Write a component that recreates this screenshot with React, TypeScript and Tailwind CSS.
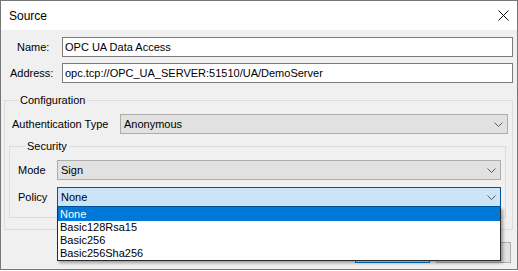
import React from "react";

const POLICIES = ["None", "Basic128Rsa15", "Basic256", "Basic256Sha256"];

function Chevron() {
  return (
    <svg width="9" height="5" viewBox="0 0 9 5" className="shrink-0">
      <polyline points="0.5,0.5 4.5,4.5 8.5,0.5" fill="none" stroke="#5a5a5a" strokeWidth="1" />
    </svg>
  );
}

function Combo({ value, active = false }: { value: string; active?: boolean }) {
  return (
    <div
      className={`flex h-[20px] w-full min-w-0 items-center justify-between border pl-[3px] pr-[4px] ${
        active ? "border-[#005499] bg-[#cce4f7]" : "border-[#adadad] bg-[#e1e1e1]"
      }`}
    >
      <span className="leading-[13px]">{value}</span>
      <Chevron />
    </div>
  );
}

export default function App() {
  return (
    <div
      className="flex h-[270px] w-[518px] flex-col border border-[#777777] bg-[#f0f0f0] text-[11px] text-black"
      style={{ fontFamily: '"Liberation Sans", Arial, sans-serif' }}
    >
      {/* title bar */}
      <div className="flex h-[29px] shrink-0 items-center justify-between bg-white pl-[8px] pr-[8px]">
        <span className="text-[12px]">Source</span>
        <svg width="11" height="11" viewBox="0 0 11 11">
          <path d="M0.5 0.5 L10.5 10.5 M10.5 0.5 L0.5 10.5" stroke="#111" strokeWidth="1" />
        </svg>
      </div>

      <div className="flex flex-1 flex-col pr-[4px]">
        <div className="mt-[7px] flex h-[20px] items-center">
          <span className="w-[61px] shrink-0 whitespace-nowrap pl-[16px]">Name:</span>
          <div className="flex h-full flex-1 items-center border border-[#7a7a7a] bg-white pl-[2px]">
            OPC UA Data Access
          </div>
        </div>
        <div className="mt-[6px] flex h-[20px] items-center">
          <span className="w-[61px] shrink-0 whitespace-nowrap pl-[9px]">Address:</span>
          <div className="flex h-full flex-1 items-center border border-[#7a7a7a] bg-white pl-[2px]">
            opc.tcp://OPC_UA_SERVER:51510/UA/DemoServer
          </div>
        </div>

        {/* Configuration */}
        <fieldset className="ml-[3px] mt-[11px] border border-[#dcdcdc] pb-[11px] pl-[7px] pr-[4px]">
          <legend className="ml-[6px] px-[2px] leading-[13px]">Configuration</legend>
          <div className="mt-[7px] flex items-center">
            <span className="w-[108px] shrink-0 whitespace-nowrap">Authentication Type</span>
            <Combo value="Anonymous" />
          </div>

          <fieldset className="-ml-[3px] mr-[2px] mt-[6px] border border-[#dcdcdc] pb-[10px] pl-[8px] pr-[4px]">
            <legend className="ml-[7px] px-[2px] leading-[13px]">Security</legend>
            <div className="mt-[7px] flex items-center">
              <span className="w-[39px] shrink-0">Mode</span>
              <Combo value="Sign" />
            </div>
            <div className="mt-[7px] flex items-center">
              <span className="w-[39px] shrink-0">Policy</span>
              <div className="relative min-w-0 flex-1">
                <Combo value="None" active />
                <div className="absolute left-0 right-0 top-full z-10 border border-t-0 border-[#2b2b2b] bg-white shadow-[2px_2px_3px_rgba(0,0,0,0.35)]">
                  {POLICIES.map((p, i) => (
                    <div
                      key={p}
                      className={`pl-[2px] ${
                        i === 0 ? "h-[14px] bg-[#0078d7] leading-[14px] text-white" : "h-[13px] leading-[13px]"
                      }`}
                    >
                      {p}
                    </div>
                  ))}
                </div>
              </div>
            </div>
          </fieldset>
        </fieldset>

        <div className="mt-[12px] flex justify-end gap-[6px] pr-[2px]">
          <button className="h-[21px] w-[75px] border border-[#0078d7] bg-[#e1e1e1]">OK</button>
          <button className="h-[21px] w-[75px] border border-[#adadad] bg-[#e1e1e1]">Cancel</button>
        </div>
      </div>
    </div>
  );
}
